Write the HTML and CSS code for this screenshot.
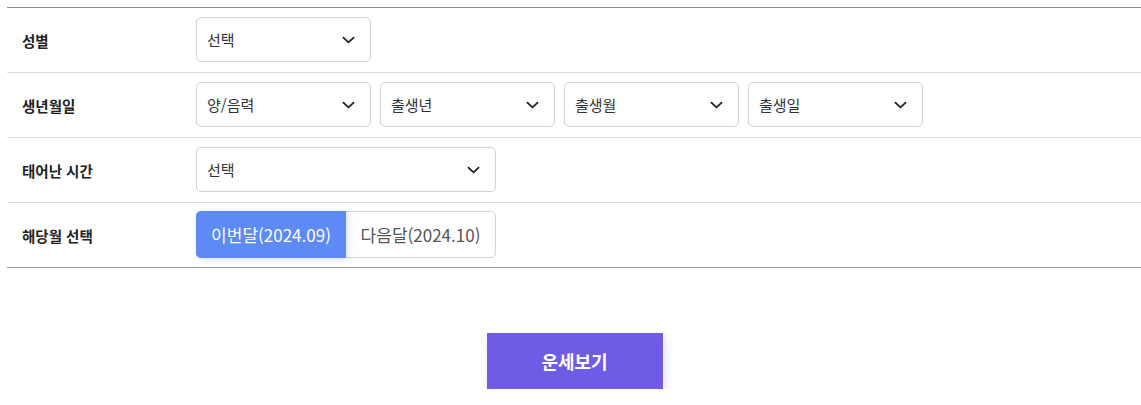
FILE: index.html
```html
<!DOCTYPE html>
<html lang="ko">
<head>
<meta charset="utf-8">
<link rel="stylesheet" href="styles.css">
</head>
<body>
<div class="form">
  <div class="row">
    <div class="label">성별</div>
    <div class="fields">
      <div class="select w175"><span>선택</span><svg class="chev" viewBox="0 0 14 8"><path d="M1.5 1.5 L7 6.5 L12.5 1.5"/></svg></div>
    </div>
  </div>
  <div class="row">
    <div class="label">생년월일</div>
    <div class="fields">
      <div class="select w175"><span>양/음력</span><svg class="chev" viewBox="0 0 14 8"><path d="M1.5 1.5 L7 6.5 L12.5 1.5"/></svg></div>
      <div class="select w175"><span>출생년</span><svg class="chev" viewBox="0 0 14 8"><path d="M1.5 1.5 L7 6.5 L12.5 1.5"/></svg></div>
      <div class="select w175"><span>출생월</span><svg class="chev" viewBox="0 0 14 8"><path d="M1.5 1.5 L7 6.5 L12.5 1.5"/></svg></div>
      <div class="select w175"><span>출생일</span><svg class="chev" viewBox="0 0 14 8"><path d="M1.5 1.5 L7 6.5 L12.5 1.5"/></svg></div>
    </div>
  </div>
  <div class="row">
    <div class="label">태어난 시간</div>
    <div class="fields">
      <div class="select w300"><span>선택</span><svg class="chev" viewBox="0 0 14 8"><path d="M1.5 1.5 L7 6.5 L12.5 1.5"/></svg></div>
    </div>
  </div>
  <div class="row last">
    <div class="label">해당월 선택</div>
    <div class="fields">
      <div class="toggle">
        <div class="opt active">이번달(2024.09)</div>
        <div class="opt">다음달(2024.10)</div>
      </div>
    </div>
  </div>
</div>
<div class="actions">
  <button class="submit">운세보기</button>
</div>
</body>
</html>
```

FILE: styles.css
```css
html, body {
  margin: 0;
  padding: 0;
  background: #fff;
  font-family: "Noto Sans CJK KR", "Noto Sans", sans-serif;
  color: #333;
  overflow: hidden;
}
.form {
  margin: 7px 0 0 7px;
  border-top: 1px solid #8a8a8a;
  border-bottom: 1px solid #9a9a9a;
}
.row {
  display: flex;
  align-items: center;
  height: 64px;
  border-bottom: 1px solid #dedede;
}
.row.last {
  border-bottom: none;
}
.label {
  width: 189px;
  padding-left: 15px;
  box-sizing: border-box;
  font-size: 14.5px;
  font-weight: 700;
  color: #222;
}
.fields {
  display: flex;
  gap: 9px;
  margin-top: -1px;
}
.select {
  height: 45px;
  box-sizing: border-box;
  border: 1px solid #d0d0d0;
  border-radius: 5px;
  display: flex;
  align-items: center;
  justify-content: space-between;
  padding: 0 15px 0 10px;
  font-size: 15px;
  color: #333;
  background: #fff;
}
.w175 { width: 175px; }
.w300 { width: 300px; }
.chev {
  width: 13px;
  height: 8px;
  fill: none;
  stroke: #222;
  stroke-width: 2;
  stroke-linecap: round;
  stroke-linejoin: round;
}
.toggle {
  display: flex;
  width: 300px;
  height: 47px;
  box-sizing: border-box;
  border: 1px solid #d4d4d4;
  border-radius: 5px;
}
.opt {
  flex: 1;
  display: flex;
  align-items: center;
  justify-content: center;
  font-size: 17px;
  color: #555;
}
.opt.active {
  flex: 0 0 150px;
  margin: -1px 0 -1px -1px;
  background: #5d8af5;
  color: #fff;
  border-radius: 5px 0 0 5px;
  box-shadow: 2px 2px 6px rgba(93, 138, 245, 0.25);
}
.actions {
  display: flex;
  justify-content: center;
  padding-top: 65px;
  padding-left: 7px;
}
.submit {
  width: 176px;
  height: 56px;
  border: none;
  background: #6f5ce6;
  color: #fff;
  font-family: "Noto Sans CJK KR", "Noto Sans", sans-serif;
  font-size: 18px;
  font-weight: 700;
  box-shadow: 2px 4px 10px rgba(111, 92, 230, 0.18);
  margin-left: 1px;
}
```
